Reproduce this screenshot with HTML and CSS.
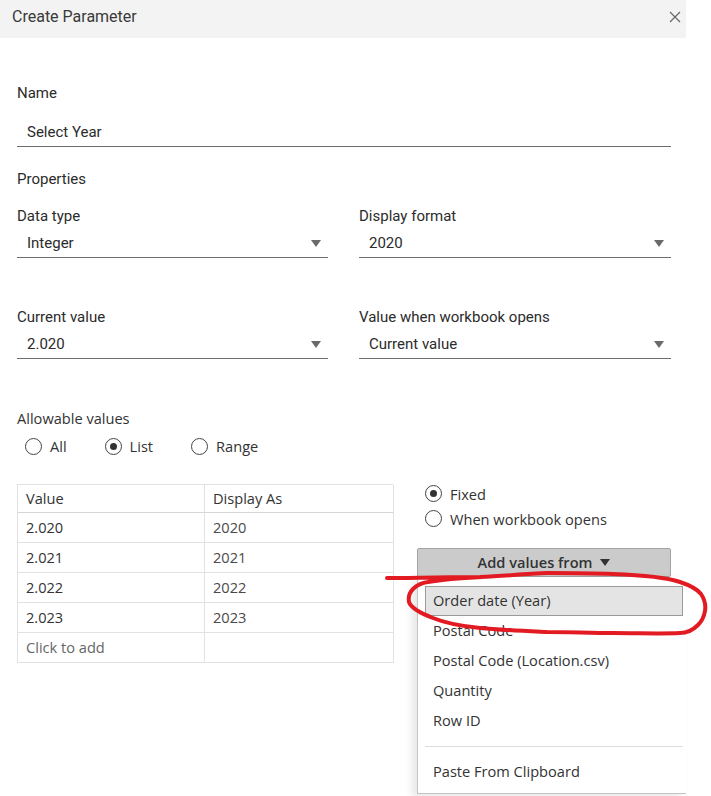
FILE: index.html
```html
<!DOCTYPE html>
<html>
<head>
<meta charset="utf-8">
<link rel="stylesheet" href="styles.css">
</head>
<body>
<div class="dialog">
  <div class="header">
    <span class="title">Create Parameter</span>
    <svg class="close" width="12" height="12" viewBox="0 0 12 12"><path d="M1 1L11 11M11 1L1 11" stroke="#666" stroke-width="1.2" fill="none"/></svg>
  </div>
  <div class="content">
    <div class="label first">Name</div>
    <div class="field">Select Year</div>
    <div class="label section">Properties</div>
    <div class="grid2">
      <div class="cell">
        <div class="label">Data type</div>
        <div class="field select"><span>Integer</span><span class="caret"></span></div>
      </div>
      <div class="cell">
        <div class="label">Display format</div>
        <div class="field select"><span>2020</span><span class="caret"></span></div>
      </div>
      <div class="cell">
        <div class="label">Current value</div>
        <div class="field select"><span>2.020</span><span class="caret"></span></div>
      </div>
      <div class="cell">
        <div class="label">Value when workbook opens</div>
        <div class="field select"><span>Current value</span><span class="caret"></span></div>
      </div>
    </div>
    <div class="allow-label">Allowable values</div>
    <div class="radio-row">
      <label class="radio"><span class="dot"></span>All</label>
      <label class="radio"><span class="dot on"></span>List</label>
      <label class="radio"><span class="dot"></span>Range</label>
    </div>
    <div class="lower">
      <div class="tbl">
        <div class="td th">Value</div><div class="td th">Display As</div>
        <div class="td">2.020</div><div class="td muted">2020</div>
        <div class="td">2.021</div><div class="td muted">2021</div>
        <div class="td">2.022</div><div class="td muted">2022</div>
        <div class="td">2.023</div><div class="td muted">2023</div>
        <div class="td add">Click to add</div><div class="td"></div>
      </div>
      <div class="side">
        <label class="radio vrow"><span class="dot on"></span>Fixed</label>
        <label class="radio vrow"><span class="dot"></span>When workbook opens</label>
        <div class="btn-wrap">
          <div class="btn">Add values from <span class="btn-caret"></span></div>
          <div class="menu">
            <div class="item hl">Order date (Year)</div>
            <div class="item">Postal Code</div>
            <div class="item">Postal Code (Location.csv)</div>
            <div class="item">Quantity</div>
            <div class="item">Row ID</div>
            <div class="sep"></div>
            <div class="item">Paste From Clipboard</div>
          </div>
        </div>
      </div>
    </div>
  </div>
</div>
<svg class="annot" width="711" height="796" viewBox="0 0 711 796">
  <path d="M387 578 C420 578 450 577 480 577 C510 576 530 573 547 573 C570 573 590 573 613 574 C640 575 665 577 680 582 C692 586 698 590 701 594 C705 600 706 605 705 611 C704 617 702 621 698 625 C693 630 688 633 680 633 C660 634 640 633 613 633 C590 633 570 632 547 632 C525 631 500 630 480 628 C460 626 445 623 433 618 C420 613 411 608 409 602 C408 596 410 592 413 589 C417 585 421 583 428 582 C445 579 460 578 482 577" fill="none" stroke="#e21b22" stroke-width="4" stroke-linecap="round" stroke-linejoin="round"/>
</svg>
</body>
</html>
```

FILE: styles.css
```css
* { box-sizing: border-box; }
html, body { margin: 0; padding: 0; background: #fff; }
body {
  width: 711px;
  height: 796px;
  overflow: hidden;
  position: relative;
  font-family: Roboto, "Liberation Sans", sans-serif;
  color: #333;
}
.dialog { width: 686px; }
.header {
  height: 38px;
  background: #f3f3f3;
  display: flex;
  align-items: center;
  justify-content: space-between;
  padding: 0 5px 4px 12px;
}
.title { font-size: 16px; color: #3a3a3a; line-height: 20px; }
.close { display: block; }
.content { padding: 0 15px 0 17px; }
.label { font-size: 15px; line-height: 20px; color: #2b2b2b; }
.first { margin-top: 45px; }
.section { margin-top: 22px; }
.field {
  margin-top: 15px;
  height: 29px;
  line-height: 28px;
  border-bottom: 1px solid #6e6e6e;
  padding-left: 10px;
  font-size: 15px;
  color: #2b2b2b;
}
.grid2 {
  margin-top: 17px;
  display: grid;
  grid-template-columns: 311px 312px;
  column-gap: 31px;
  row-gap: 49px;
}
.cell .field { margin-top: 3px; line-height: 30px; }
.select {
  display: flex;
  justify-content: space-between;
  align-items: center;
  padding-right: 7px;
}
.caret {
  width: 0; height: 0;
  border-left: 5px solid transparent;
  border-right: 5px solid transparent;
  border-top: 7px solid #6a6a6a;
}
.allow-label {
  margin-top: 49px;
  font-family: "Open Sans", sans-serif;
  font-size: 14.6px;
  line-height: 20px;
  color: #333;
}
.radio-row {
  margin-top: 8px;
  display: flex;
  gap: 38px;
  padding-left: 8px;
}
.radio {
  display: flex;
  align-items: center;
  gap: 8px;
  font-family: "Open Sans", sans-serif;
  font-size: 14.6px;
  line-height: 20px;
  color: #333;
}
.dot {
  width: 17px; height: 17px;
  border: 1px solid #444;
  border-radius: 50%;
  background: #fff;
  display: flex;
  align-items: center;
  justify-content: center;
}
.dot.on::after {
  content: "";
  width: 7px; height: 7px;
  border-radius: 50%;
  background: #333;
}
.lower {
  margin-top: 28px;
  display: flex;
  align-items: flex-start;
}
.tbl {
  width: 376px;
  display: grid;
  grid-template-columns: 187px 189px;
  border-top: 1px solid #e2e2e2;
  border-left: 1px solid #e2e2e2;
  font-family: "Open Sans", sans-serif;
  font-size: 14.6px;
  color: #333;
}
.td {
  height: 30px;
  line-height: 29px;
  padding-left: 8px;
  border-right: 1px solid #e2e2e2;
  border-bottom: 1px solid #e2e2e2;
}
.th { height: 28px; line-height: 27px; border-bottom-color: #d6d6d6; }
.muted { color: #4a4a4a; }
.add { color: #666; }
.side {
  margin-left: 24px;
  width: 254px;
  margin-top: -3px;
}
.vrow { height: 25px; padding-left: 8px; }
.btn-wrap { position: relative; margin-top: 17px; }
.btn {
  height: 29px;
  border: 1px solid #a3a3a3;
  border-radius: 2px;
  background: #cbcbcb;
  display: flex;
  align-items: center;
  justify-content: center;
  gap: 8px;
  padding-bottom: 1px;
  font-family: "Open Sans", sans-serif;
  font-size: 14.6px;
  font-weight: 600;
  color: #333;
}
.btn-caret {
  width: 0; height: 0;
  border-left: 5px solid transparent;
  border-right: 5px solid transparent;
  border-top: 7px solid #333;
}
.menu {
  position: absolute;
  top: 29px;
  left: 0;
  width: 269px;
  background: #fff;
  border-left: 1px solid #c4c4c4;
  border-bottom: 1px solid #c4c4c4;
  box-shadow: -5px 3px 8px rgba(0,0,0,0.10);
  padding: 9px 3px 6px 7px;
  font-family: "Open Sans", sans-serif;
  font-size: 14.6px;
  color: #333;
}
.item {
  height: 30px;
  line-height: 27px;
  padding-left: 7px;
  border: 1px solid transparent;
}
.item.hl { background: #e4e4e4; border-color: #9a9a9a; }
.sep { height: 1px; background: #dcdcdc; margin: 10px 0; }
.annot { position: absolute; left: 0; top: 0; pointer-events: none; }
```
